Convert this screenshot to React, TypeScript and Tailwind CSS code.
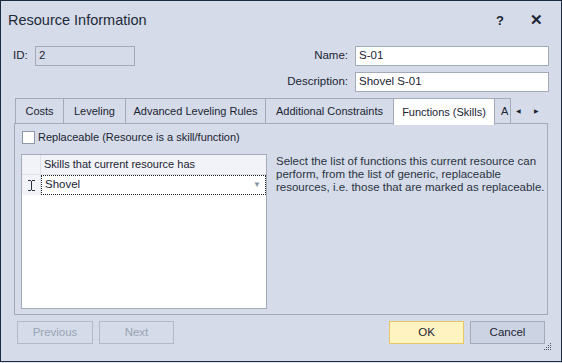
const tabs = [
  { label: "Costs", w: "w-[49px]" },
  { label: "Leveling", w: "w-[63px]" },
  { label: "Advanced Leveling Rules", w: "w-[141px]" },
  { label: "Additional Constraints", w: "w-[129px]" },
];

function Grip() {
  const dots = [
    [6, 0],
    [6, 2],
    [4, 2],
    [6, 4],
    [4, 4],
    [2, 4],
    [6, 6],
    [4, 6],
    [2, 6],
    [0, 6],
  ];
  return (
    <svg width="8" height="8" viewBox="0 0 8 8" className="absolute right-[9px] bottom-[10px]">
      {dots.map(([x, y], i) => (
        <rect key={i} x={x} y={y} width="1" height="1" fill="#4a5568" />
      ))}
    </svg>
  );
}

export default function App() {
  return (
    <div
      className="w-[562px] h-[363px] bg-[#dfe3ec] text-[#1b2433] text-[11px] whitespace-nowrap"
      style={{ fontFamily: '"Liberation Sans", Arial, sans-serif' }}
    >
      <div className="relative w-[562px] h-[362px] border border-[#1c2b3f] bg-[#d5dbe8] flex flex-col">
        {/* Title bar */}
        <div className="h-[39px] flex items-center justify-between pl-[7px] pr-[18px]">
          <div className="text-[14.5px] text-[#1e2a3a]">Resource Information</div>
          <div className="flex items-center gap-[26px] font-bold text-[13px]">
            <span>?</span>
            <span className="text-[15px]">✕</span>
          </div>
        </div>

        {/* ID / Name row */}
        <div className="mt-[6px] flex items-center pl-[12px] pr-[12px] h-[20px] text-[11.5px]">
          <span className="w-[22px]">ID:</span>
          <div className="w-[100px] h-[20px] border border-[#a3abbb] px-[3px] flex items-center">2</div>
          <div className="flex-1 flex justify-end items-center">
            <span className="mr-[7px]">Name:</span>
            <div className="w-[194px] h-[20px] border border-[#a3abbb] bg-white px-[3px] flex items-center">S-01</div>
          </div>
        </div>
        <div className="mt-[6px] flex justify-end items-center pr-[12px] h-[20px] text-[11.5px]">
          <span className="mr-[7px]">Description:</span>
          <div className="w-[194px] h-[20px] border border-[#a3abbb] bg-white px-[3px] flex items-center">Shovel S-01</div>
        </div>

        {/* Tabs */}
        <div className="mt-[6px] mx-[13px] flex-1 flex flex-col">
          <div className="flex h-[26px] pl-[1px] relative z-10">
            {tabs.map((t) => (
              <div
                key={t.label}
                className={`${t.w} shrink-0 h-[26px] border border-[#a3abbb] -ml-[1px] first:ml-0 flex items-center justify-center bg-[#d5dbe8]`}
              >
                {t.label}
              </div>
            ))}
            <div className="w-[102px] shrink-0 h-[27px] border border-b-0 border-[#a3abbb] -ml-[1px] flex items-start justify-center pt-[5px] bg-white">
              Functions (Skills)
            </div>
            <div className="h-[26px] w-[16px] shrink-0 overflow-hidden border border-l-0 border-[#a3abbb] flex items-center pl-[6px]">
              A
            </div>
            <div className="flex-1 flex items-center justify-end gap-[13px] pr-[9px] text-[6px] text-[#1b2433]">
              <span>◀</span>
              <span>▶</span>
            </div>
          </div>
          <div className="h-[192px] border border-[#a3abbb] -mt-[1px] pl-[7px] pt-[7px] flex flex-col">
            <label className="flex items-center gap-[3px] h-[13px]">
              <span className="w-[13px] h-[13px] border border-[#8f98aa] bg-white" />
              <span>Replaceable (Resource is a skill/function)</span>
            </label>
            <div className="mt-[10px] flex">
              <div className="w-[246px] h-[155px] -ml-[1px] border border-[#a3abbb] bg-white flex flex-col">
                <div className="flex h-[20px] bg-[#f1f3f8] border-b border-[#dde1ea]">
                  <div className="w-[19px] border-r border-[#dde1ea]" />
                  <div className="flex items-center pl-[3px]">Skills that current resource has</div>
                </div>
                <div className="flex h-[20px]">
                  <div className="w-[19px] border-r border-[#dde1ea] bg-[#f1f3f8] flex items-center justify-center">
                    <svg width="7" height="11" viewBox="0 0 7 11">
                      <path d="M0 0.5h3M4 0.5h3M3.5 1v9M0 10.5h3M4 10.5h3" stroke="#2a3342" strokeWidth="1" fill="none" />
                    </svg>
                  </div>
                  <div className="flex-1 border border-dotted border-[#222] flex items-center justify-between pl-[3px] pr-[4px] text-[11.5px]">
                    <span>Shovel</span>
                    <span className="text-[8px] text-[#8a93a3]">▼</span>
                  </div>
                </div>
              </div>
              <div className="ml-[9px] mt-[1px] leading-[13px] text-[#2a3342] text-[11.5px]">
                Select the list of functions this current resource can
                <br />
                perform, from the list of generic, replaceable
                <br />
                resources, i.e. those that are marked as replaceable.
              </div>
            </div>
          </div>
        </div>

        {/* Buttons */}
        <div className="h-[46px] flex items-start pt-[6px] pl-[16px] pr-[16px] text-[11.5px]">
          <div className="w-[76px] h-[23px] border border-[#b3b9c7] text-[#9aa3b5] flex items-center justify-center">Previous</div>
          <div className="ml-[6px] w-[75px] h-[23px] border border-[#b3b9c7] text-[#9aa3b5] flex items-center justify-center">Next</div>
          <div className="flex-1" />
          <div className="w-[75px] h-[23px] border border-[#e8c765] bg-[#fff3c1] flex items-center justify-center">OK</div>
          <div className="ml-[6px] w-[75px] h-[23px] border border-[#a3abbb] bg-[#ccd3e3] flex items-center justify-center">Cancel</div>
        </div>
        <Grip />
      </div>
    </div>
  );
}
